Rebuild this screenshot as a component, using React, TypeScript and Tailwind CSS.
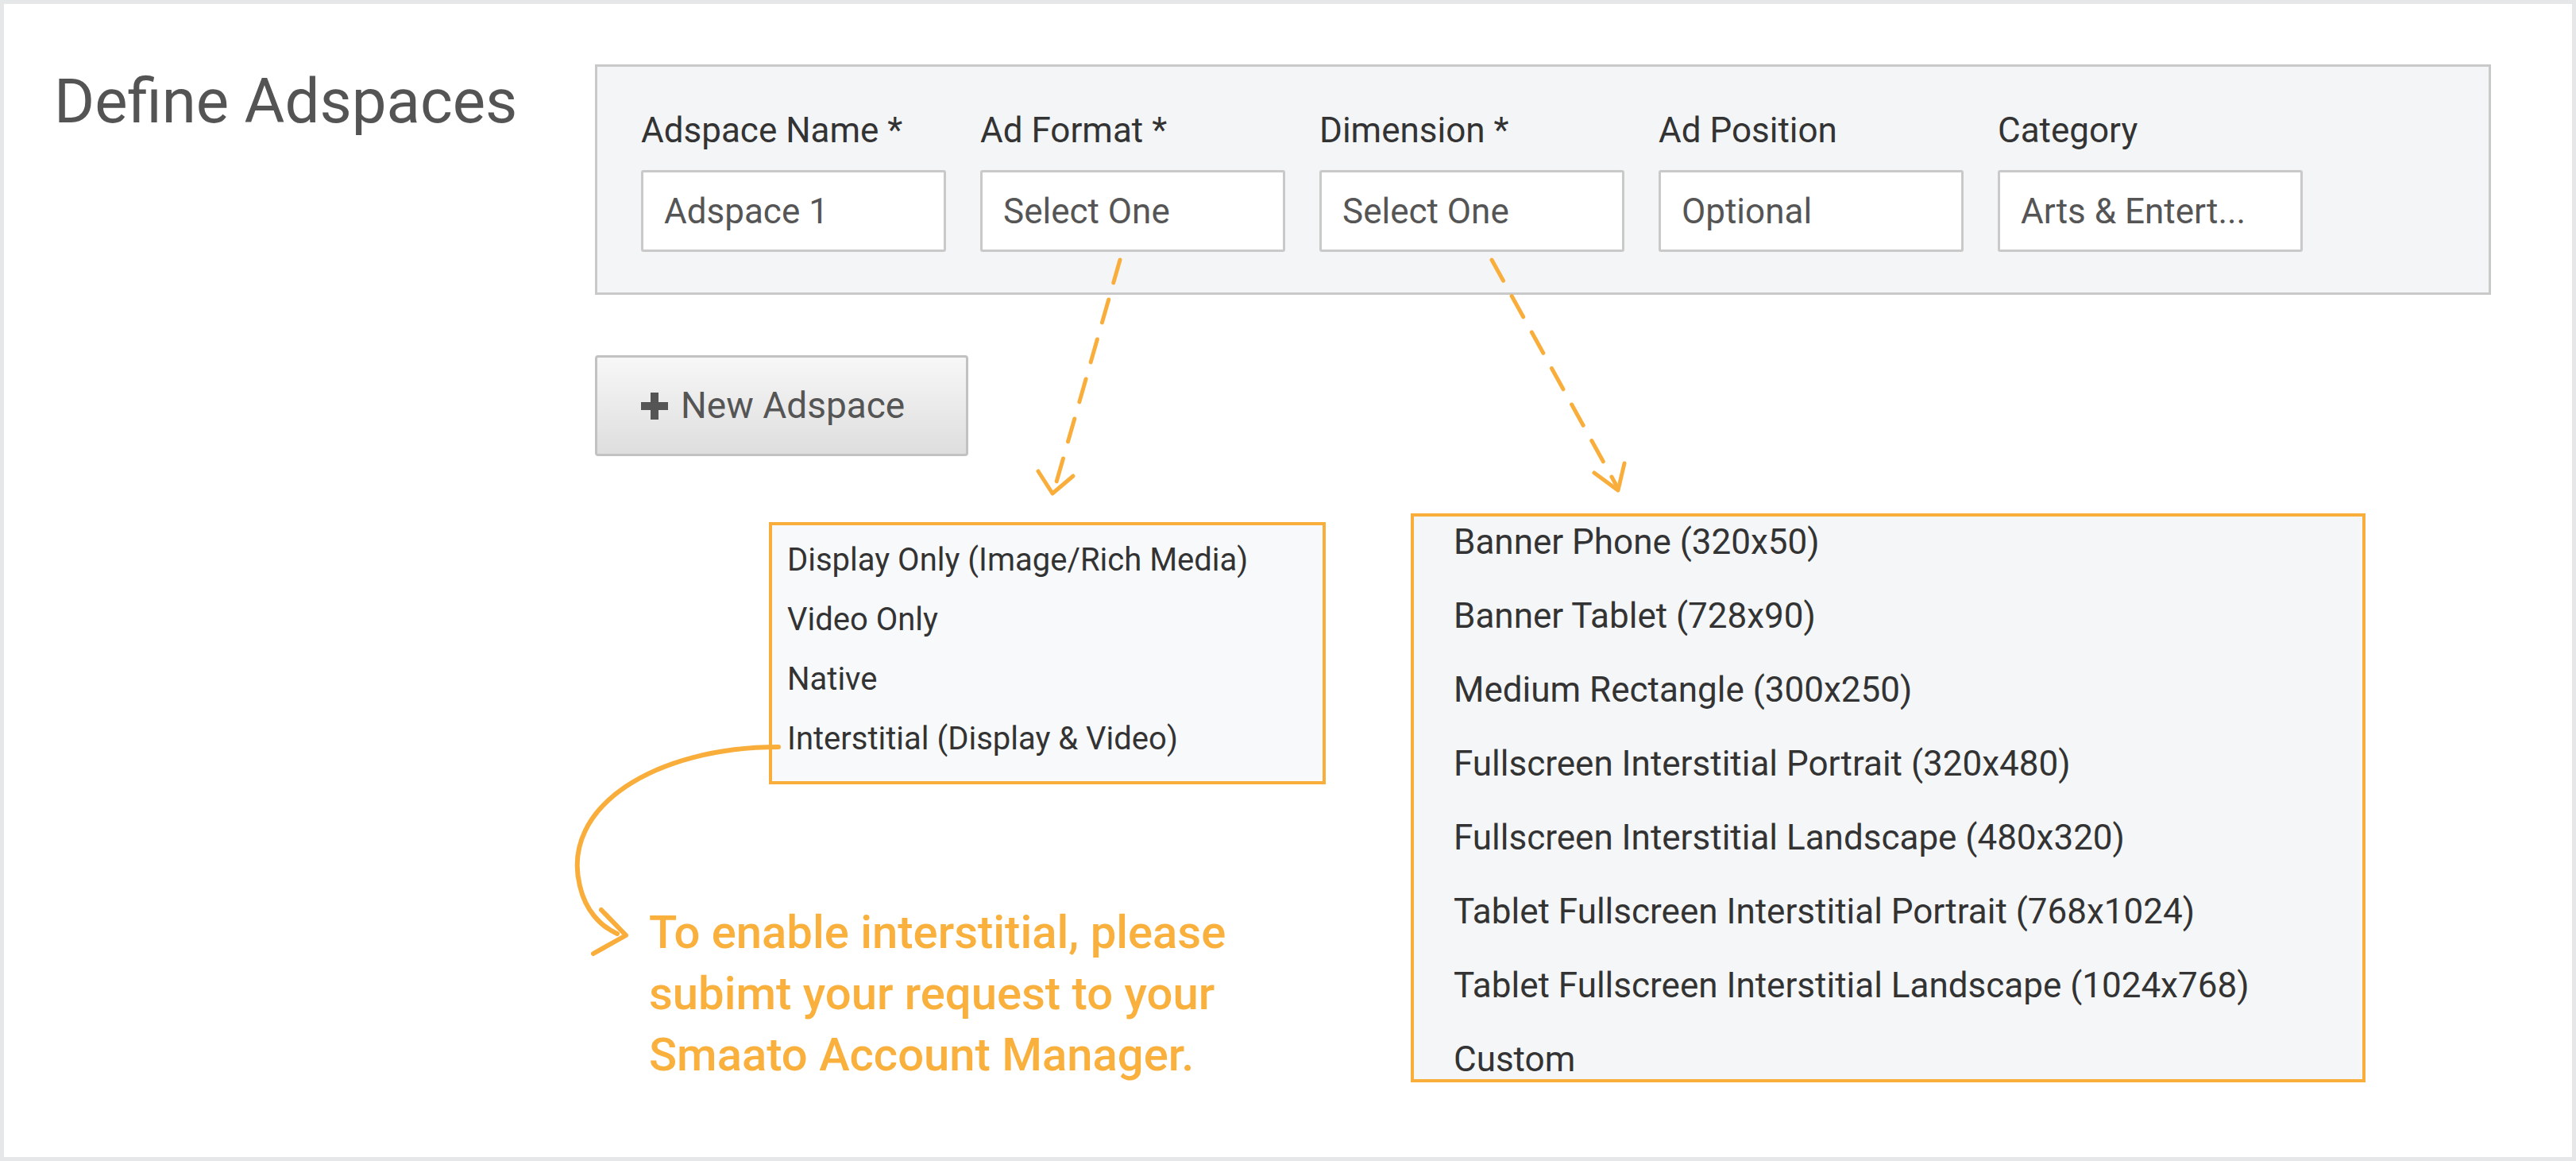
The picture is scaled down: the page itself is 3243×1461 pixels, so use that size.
export default function App() {
  const labels = ["Adspace Name *", "Ad Format *", "Dimension *", "Ad Position", "Category"];
  const values = ["Adspace 1", "Select One", "Select One", "Optional", "Arts & Entert..."];
  const left = ["Display Only (Image/Rich Media)", "Video Only", "Native", "Interstitial (Display & Video)"];
  const right = [
    "Banner Phone (320x50)",
    "Banner Tablet (728x90)",
    "Medium Rectangle (300x250)",
    "Fullscreen Interstitial Portrait (320x480)",
    "Fullscreen Interstitial Landscape (480x320)",
    "Tablet Fullscreen Interstitial Portrait (768x1024)",
    "Tablet Fullscreen Interstitial Landscape (1024x768)",
    "Custom",
  ];
  return (
    <div className="relative w-[3243px] h-[1461px] bg-white border-[5px] border-[#e6e7e9] [font-family:Roboto,sans-serif] overflow-hidden">
      <div className="flex">
        <div className="w-[744px] pl-[63px] pt-[84px] text-[78px] leading-none text-[#545454]">Define Adspaces</div>
        <div className="flex flex-col pt-[76px]">
          <div className="w-[2387px] h-[290px] bg-[#f4f5f7] border-[3px] border-[#c9c9c9] pl-[55px] pt-[54px]">
            <div className="flex gap-[43px]">
              {labels.map((l, i) => (
                <div key={i} className="flex flex-col w-[384px]">
                  <div className="text-[44px] leading-[52px] text-[#333] h-[52px] whitespace-nowrap">{l}</div>
                  <div className="mt-[24px] h-[103px] bg-white border-[3px] border-[#c9c9c9] rounded-[3px] pl-[26px] flex items-center text-[44px] text-[#555] whitespace-nowrap">{values[i]}</div>
                </div>
              ))}
            </div>
          </div>
          <div className="mt-[76px] w-[470px] h-[127px] rounded-[4px] border-[3px] border-[#c2c2c2] bg-gradient-to-b from-[#f7f7f7] to-[#dedede] flex items-center pl-[55px] gap-[16px] text-[46px] text-[#555]">
            <svg width="34" height="34" viewBox="0 0 34 34"><path d="M12 0h10v12h12v10H22v12H12V22H0V12h12z" fill="#555" /></svg>
            <span>New Adspace</span>
          </div>
          <div className="flex mt-[72px]">
            <div className="flex flex-col mt-[11px]">
              <div className="ml-[219px] w-[701px] h-[330px] border-[4px] border-[#f9ae3b] bg-[#f8f9fb] pl-[19px] pt-[6px]">
                {left.map((t) => (
                  <div key={t} className="h-[75px] flex items-center text-[40px] text-[#333] whitespace-nowrap">{t}</div>
                ))}
              </div>
              <div className="ml-[68px] mt-[148px] text-[58px] leading-[77px] font-medium text-[#f9b03d]">
                To enable interstitial, please<br />subimt your request to your<br />Smaato Account Manager.
              </div>
            </div>
            <div className="ml-[107px] w-[1202px] h-[716px] border-[4px] border-[#f9ae3b] bg-[#f5f6f8] pl-[50px] overflow-hidden">
              <div className="-mt-[15px]">
                {right.map((t) => (
                  <div key={t} className="h-[93px] flex items-center text-[44px] text-[#333] whitespace-nowrap">{t}</div>
                ))}
              </div>
            </div>
          </div>
        </div>
      </div>
      <svg className="absolute inset-0 pointer-events-none" width="3243" height="1461">
        <g stroke="#f9ae3b" strokeWidth="5" fill="none" strokeLinecap="round" strokeLinejoin="round">
          <path d="M1405 322 L1322 612" strokeDasharray="30 22" />
          <path d="M1302 588 L1320 616 L1346 594" />
          <path d="M1873 322 L2030 606" strokeDasharray="30 22" />
          <path d="M2002 590 L2032 612 L2040 578" />
          <path d="M975 935 C 820 935 700 1010 725 1110 C 732 1140 750 1160 772 1170" strokeWidth="6" />
          <path d="M752 1140 L783 1172 L742 1195" strokeWidth="6" />
        </g>
      </svg>
    </div>
  );
}
